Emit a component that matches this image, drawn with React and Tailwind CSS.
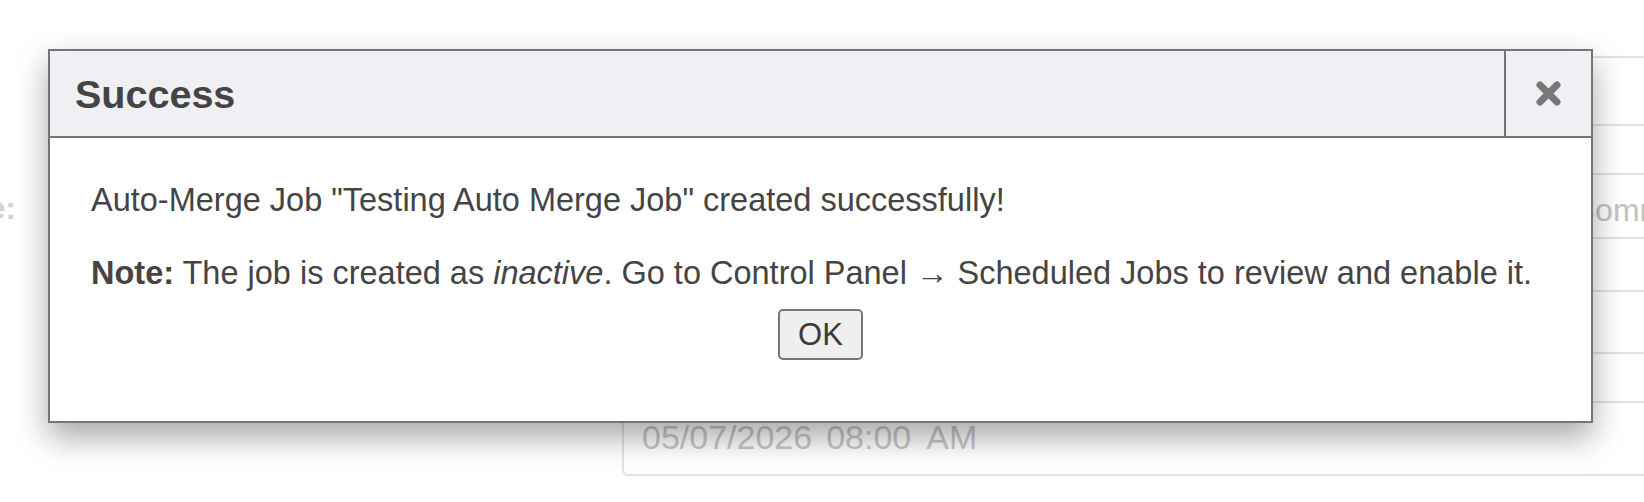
import React from 'react';

// --- faded form behind the dialog ---
const FormRow = ({ label, height, className = '', children }) => (
  <div className={`flex items-center ${className}`}>
    <div className="w-[16px] shrink-0 flex justify-end whitespace-nowrap font-bold text-[32px] text-[#d2d2d2] pt-[4px]">
      {label}
    </div>
    <div className="w-[606px] shrink-0" />
    <div
      className="flex-1 mr-[-40px] border-2 border-[#e2e2e2] rounded-[6px] flex items-center text-[32px] text-[#c2c2c2] whitespace-nowrap overflow-hidden"
      style={{ height }}
    >
      {children}
    </div>
  </div>
);

const CloseIcon = () => (
  <svg width="25" height="25" viewBox="0 0 25 25" fill="none">
    <path d="M4 4L21 21M21 4L4 21" stroke="#777777" strokeWidth="7" strokeLinecap="round" />
  </svg>
);

export default function App() {
  return (
    <div className="relative w-full h-[502px] overflow-hidden bg-white font-['Liberation_Sans',Arial,sans-serif]">
      {/* background form */}
      <div className="flex flex-col pt-[56px]">
        <FormRow height={70} />
        <FormRow label="Type:" height={66} className="mt-[47px]">
          <span className="pl-[948px] pt-[8px]">Comments</span>
        </FormRow>
        <FormRow height={64} className="mt-[51px]" />
        <FormRow height={75} className="mt-[47px]">
          <div className="flex items-center pl-[18px] pb-[2px] text-[34px] text-[#c8c8c8]">
            <span>05/07/2026</span>
            <span className="ml-[14px]">08:00</span>
            <span className="ml-[15px]">AM</span>
          </div>
        </FormRow>
      </div>

      {/* success dialog */}
      <div className="absolute left-[48px] top-[49px] w-[1545px] shadow-[0_14px_30px_rgba(0,0,0,0.35)] text-[#444444]">
        <div className="flex border-2 border-[#757575] bg-[#f0eff4]">
          <div className="flex-1 h-[85px] flex items-center pl-[25px] pt-[2px]">
            <h2 className="text-[39.5px] font-bold leading-none">Success</h2>
          </div>
          <button className="w-[87px] h-[85px] border-l-2 border-[#757575] flex items-center justify-center">
            <CloseIcon />
          </button>
        </div>

        <div className="bg-white border-x-2 border-b-2 border-[#757575] px-[41px] pt-[42px] pb-[61px]">
          <p className="text-[32.5px] leading-[40px] whitespace-nowrap">
            Auto-Merge Job "Testing Auto Merge Job" created successfully!
          </p>
          <p className="mt-[33px] text-[32.5px] leading-[40px] whitespace-nowrap">
            <strong className="font-bold">Note:</strong> The job is created as <em>inactive</em>. Go to Control Panel → Scheduled Jobs to review and enable it.
          </p>
          <div className="flex justify-center mt-[16px]">
            <button className="w-[85px] h-[51px] border-2 border-[#767676] rounded-[5px] bg-[#efefef] text-[31px] text-[#3a3a3a] leading-none">
              OK
            </button>
          </div>
        </div>
      </div>
    </div>
  );
}
